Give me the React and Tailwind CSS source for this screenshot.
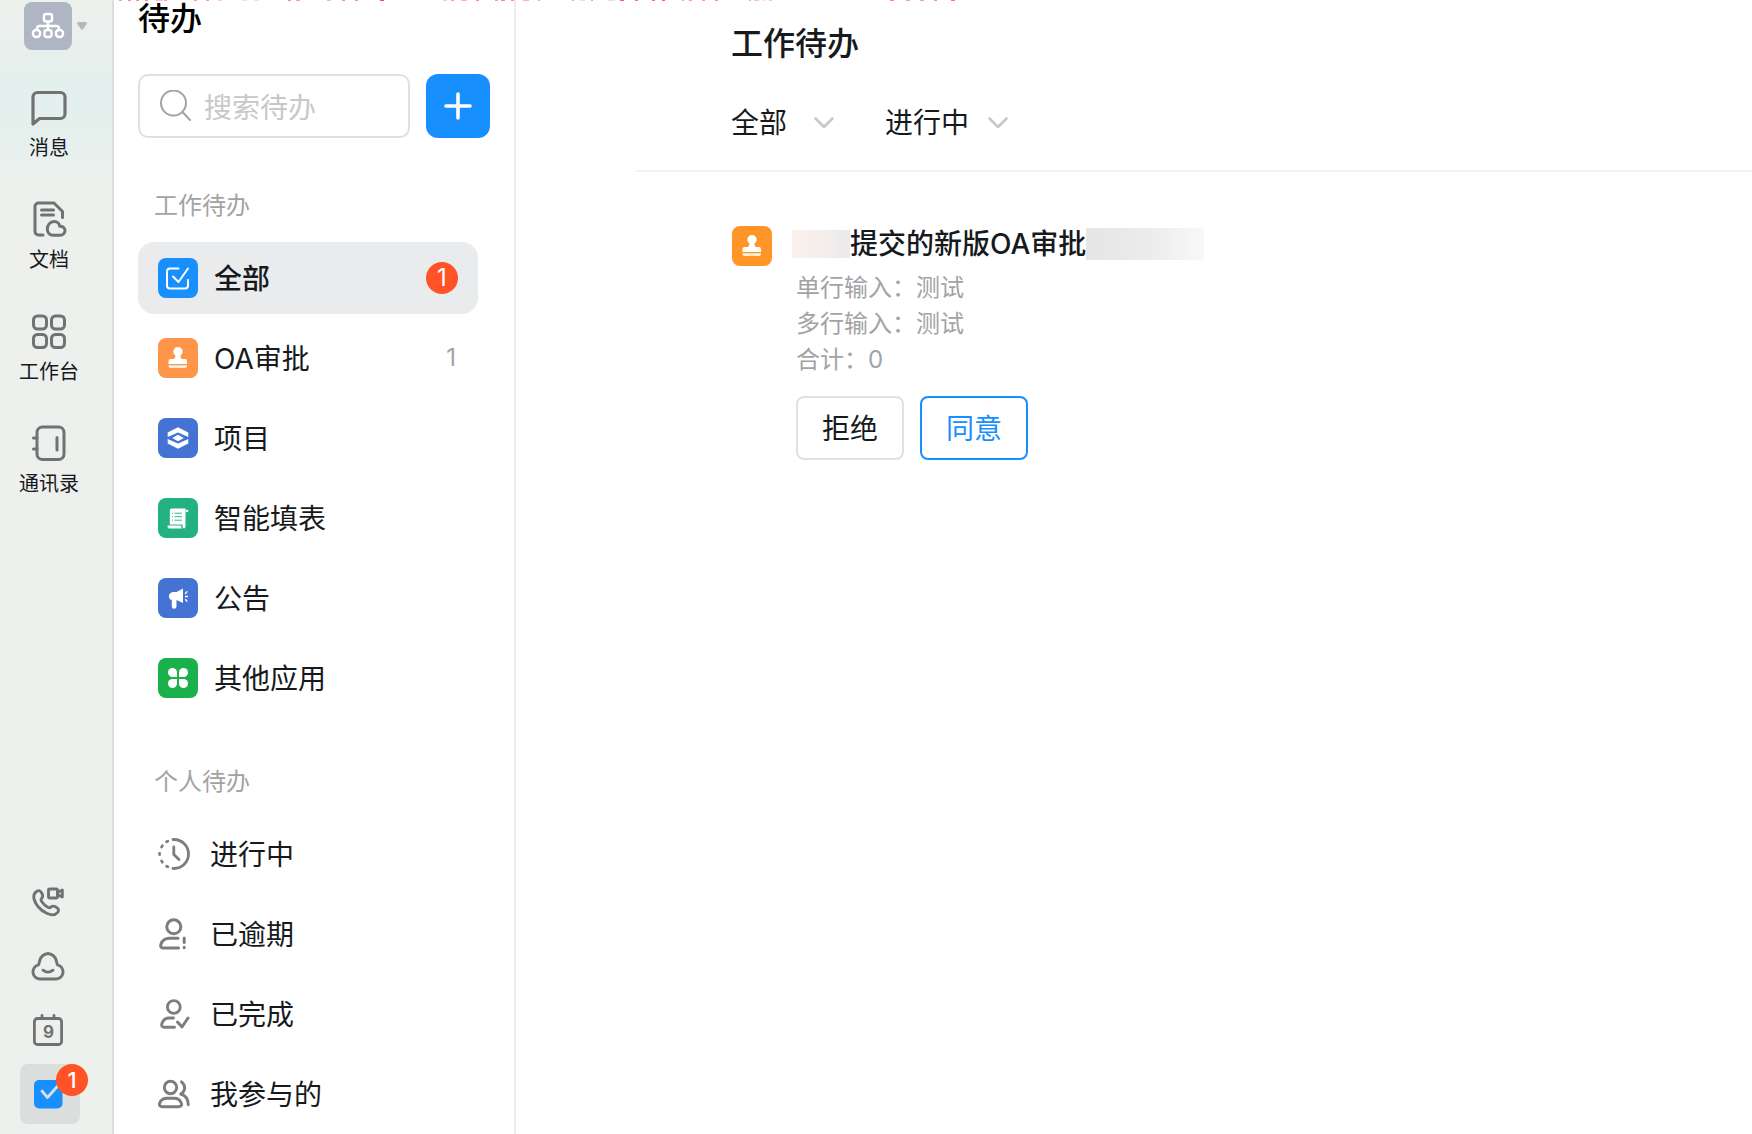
import React, { useState } from "react";
import clsx from "clsx";

const STROKE = {
  fill: "none",
  stroke: "currentColor",
  strokeLinecap: "round",
  strokeLinejoin: "round",
};

const OrgIcon = () => (
  <svg className="size-12" viewBox="0 0 48 48" {...STROKE} strokeWidth="2.4">
    <rect x="20" y="12" width="8" height="7.5" rx="2" />
    <path d="M13 27v-.5a2.500 2.500 0 0 1 2.500-2.500h17a2.500 2.500 0 0 1 2.500 2.500v.5M24 20v7" />
    <rect x="9" y="28" width="7" height="7" rx="3" />
    <rect x="20.500" y="28" width="7" height="7" rx="2.500" />
    <rect x="32" y="28" width="7" height="7" rx="3" />
  </svg>
);

const MessageIcon = () => (
  <svg className="size-10" viewBox="0 0 40 40" {...STROKE} strokeWidth="3.2">
    <path d="M4 36V9a4.500 4.500 0 0 1 4.500-4.500h23A4.500 4.500 0 0 1 36 9v17a4.500 4.500 0 0 1-4.500 4.500H10.500z" />
  </svg>
);

const DocIcon = () => (
  <svg className="size-10" viewBox="0 0 40 40" {...STROKE} strokeWidth="3">
    <path d="M14 35H9.500a3.500 3.500 0 0 1-3.500-3.500v-25A3.500 3.500 0 0 1 9.500 3H25l8.500 8.500V17.500" />
    <path d="M12.500 10h12M12.500 15h12" />
    <path d="M24.500 35.200c-4 0-6.200-2.700-6.200-6.300s2.700-7.400 6.700-7.400c3.200 0 5.500 2 5.700 4.800 3-.3 5.300 1.600 5.300 4.300 0 2.900-2.200 4.600-4.800 4.600z" />
  </svg>
);

const GridIcon = () => (
  <svg className="size-10" viewBox="0 0 40 40" {...STROKE} strokeWidth="3">
    <rect x="4.500" y="4" width="13" height="13" rx="4" />
    <rect x="22.500" y="4" width="13" height="13" rx="4" />
    <rect x="4.500" y="22.500" width="13" height="13" rx="4" />
    <rect x="22.500" y="22.500" width="13" height="13" rx="4" />
  </svg>
);

const ContactsIcon = () => (
  <svg className="size-10" viewBox="0 0 40 40" {...STROKE} strokeWidth="3">
    <rect x="8" y="3" width="27" height="32.500" rx="5.500" />
    <path d="M4.500 14H8M4.500 25H8M28 13.500v12.500" />
  </svg>
);

const CallIcon = () => (
  <svg className="size-9" viewBox="0 0 36 36" {...STROKE} strokeWidth="2.900">
    <path d="M6.500 7.500c2.500-1.800 4-.8 5.500 2 1.300 2.500 1 3.500-.3 4.800-1.200 1.200-.8 2.200.3 3.700 1.500 2 3 3.500 5 4.800 1.500 1 2.700 1.300 3.800.3 1.500-1.300 2.600-1.500 4.700-.3 3.200 1.900 3.900 3.600 2.200 5.600-2.500 3-6.500 3.100-11 .9C10.500 26.200 5.800 21 4.200 15.500c-1-3.500-.2-6.300 2.300-8z" />
    <rect x="18.500" y="5" width="9" height="9" rx="1" />
    <path d="M27.500 8.500l4.800-2.500v7L27.500 10.500z" />
  </svg>
);

const CloudIcon = () => (
  <svg className="size-9" viewBox="0 0 36 36" {...STROKE} strokeWidth="2.900">
    <path d="M10.500 31h15a7.200 7.200 0 0 0 2-14.200c-.5-1-.6-1.400-.9-3A9.300 9.300 0 0 0 18 5.500a9.300 9.300 0 0 0-8.600 8.300c-.3 1.600-.4 2-.9 3A7.200 7.200 0 0 0 10.500 31z" />
    <path d="M13 22.200c3 2.300 7 2.300 10 0" />
  </svg>
);

const CalendarIcon = () => (
  <svg className="size-9" viewBox="0 0 36 36" {...STROKE} strokeWidth="2.800">
    <rect x="4.400" y="6.500" width="27.200" height="26" rx="3" />
    <path d="M12 3.500v2M24 3.500v2" />
    <text
      x="18.500"
      y="25.500"
      textAnchor="middle"
      fontSize="17"
      fontWeight="700"
      fill="currentColor"
      stroke="none"
    >
      9
    </text>
  </svg>
);

const TodoIcon = () => (
  <svg className="size-9" viewBox="0 0 36 36" {...STROKE}>
    <rect x="4" y="4" width="28.500" height="28.500" rx="5" fill="#188fff" stroke="none" />
    <path d="M12 15l5.500 6.500L29 8.500" stroke="#dcdedd" strokeWidth="2.800" />
  </svg>
);

const AllIcon = () => (
  <svg className="size-10" viewBox="0 0 40 40" {...STROKE} strokeWidth="2">
    <path d="M20.500 10.500H12A3 3 0 0 0 9 13.500v14a3 3 0 0 0 3 3h15a3 3 0 0 0 3-3V22M15 18.500l5.500 5.500 9.500-13.500" />
  </svg>
);

const StampIcon = () => (
  <svg className="size-10" viewBox="0 0 40 40" fill="currentColor">
    <path d="M20 9a4.600 4.600 0 0 1 3 8.100c-.7.700-.8 2.400.3 3.400.5.500 1 .5 2 .5H27a2 2 0 0 1 2 2v3H10.500v-3a2 2 0 0 1 2-2h2c1 0 1.500 0 2-.5 1.100-1 1.200-2.700.5-3.400A4.600 4.600 0 0 1 20 9z" />
    <path d="M10.500 27.300H29V28a2 2 0 0 1-2 2H12.500a2 2 0 0 1-2-2z" opacity=".85" />
  </svg>
);

const ProjectIcon = () => (
  <svg className="size-10" viewBox="0 0 40 40" fill="currentColor">
    <path d="M20 9.300L30.300 14.600V19L20 14.600 9.700 19v-4.400z" />
    <path d="M20 16.800l5.800 3.200-5.800 3.200-5.800-3.200z" />
    <path d="M20 30.700L9.700 25.400V21L20 25.400 30.300 21v4.400z" />
  </svg>
);

const FormIcon = () => (
  <svg className="size-10" viewBox="0 0 40 40" fill="currentColor">
    <path d="M13 10.500h14.500V28c0 1.500-.6 2.500-1.500 2.500S24.500 29.500 24.500 28v-1.500H11.800V12z" />
    <path d="M9.500 27.500h13.500c0 1.200.3 2 .8 3H11c-1 0-1.500-1-1.500-3z" />
    <circle cx="29" cy="13" r="1.300" />
    <path d="M14 15.200h1M16.500 15.200h7.500M14 18.700h1M16.500 18.700h7.500M14 22.200h1M16.500 22.200h7.500" stroke="#23b27f" strokeWidth=".9" />
  </svg>
);

const NoticeIcon = () => (
  <svg className="size-10" viewBox="0 0 40 40" fill="currentColor">
    <path d="M15 14h3.500l6.500-3.500v14.500l-6.500-3V28.500a2.300 2.300 0 0 1-4.700 0V22c-4-.5-4-7.500 1.200-8z" />
    <path d="M27.500 15.500l1.500-1.800M27.500 18.500H29.500M27.500 21.500l1.500 1.800" stroke="currentColor" strokeWidth="1.300" strokeLinecap="round" />
  </svg>
);

const AppsIcon = () => (
  <svg className="size-10" viewBox="0 0 40 40" fill="currentColor">
    <path d="M14.500 10a4.500 4.500 0 0 1 4.500 4.500V19h-4.500a4.500 4.500 0 0 1 0-9z" />
    <path d="M25.500 10a4.500 4.500 0 0 1 0 9H21v-4.500a4.500 4.500 0 0 1 4.500-4.500z" />
    <path d="M14.500 21H19v4.500a4.500 4.500 0 1 1-4.500-4.500z" />
    <path d="M21 21h4.500a4.500 4.500 0 1 1-4.500 4.500z" />
  </svg>
);

const DoingIcon = () => (
  <svg className="size-8" viewBox="0 0 32 32" {...STROKE} strokeWidth="2.800">
    <path d="M15 1.500h1a14.500 14.500 0 0 1 0 29h-1M15.800 9v7.500l5.200 5" />
    <path d="M8.600 3.800l1.200-.6M3.600 9l.8-1.200M1.600 15.400v1.200M3.600 23l.8 1.200M8.600 28.200l1.200.6" />
  </svg>
);

const OverdueIcon = () => (
  <svg className="size-8" viewBox="0 0 32 32" {...STROKE} strokeWidth="3">
    <circle cx="15.800" cy="8.800" r="7" />
    <path d="M20.500 30H5c-2.300 0-2.700-2-2-4 1.300-3.700 4.500-5.800 8.500-5.800h8.500M26.200 20v4.500M26.200 29.300v.5" />
  </svg>
);

const DoneIcon = () => (
  <svg className="size-8" viewBox="0 0 32 32" {...STROKE} strokeWidth="2.900">
    <circle cx="15.800" cy="9" r="6.400" />
    <path d="M16.500 29.200H6c-2.300 0-2.700-2-2-3.800C5.200 22 7.700 20 11 20h4.500M19.500 24l4.500 5 6-9" />
  </svg>
);

const JoinedIcon = () => (
  <svg className="size-8" viewBox="0 0 32 32" {...STROKE} strokeWidth="2.900">
    <circle cx="12.500" cy="9.500" r="6.200" />
    <path d="M4.500 28.700c-2.600 0-3.600-1.500-2.800-3.700 1.200-3.400 3.800-4.800 7.300-4.800h7c3.500 0 6.100 1.400 7.300 4.800.8 2.200-.2 3.700-2.800 3.700z" />
    <path d="M23.500 3.800c4.500 3.500 4.300 9.500-.8 12.200 5 1.500 7.500 5.500 7.600 10.700" />
  </svg>
);

const ChevronIcon = ({ className }) => (
  <svg className={className} viewBox="0 0 20 12" {...STROKE} strokeWidth="2.600">
    <path d="M1.500 1.500L10 10l8.500-8.500" />
  </svg>
);

const NAV_ITEMS = [
  { label: "消息", Icon: MessageIcon },
  { label: "文档", Icon: DocIcon },
  { label: "工作台", Icon: GridIcon },
  { label: "通讯录", Icon: ContactsIcon },
];

const TOOLS = [
  { label: "电话会议", Icon: CallIcon },
  { label: "云盘", Icon: CloudIcon },
  { label: "日历", Icon: CalendarIcon },
];

const WORK_ITEMS = [
  { label: "全部", Icon: AllIcon, color: "bg-[#188fff]", count: 1 },
  { label: "OA审批", Icon: StampIcon, color: "bg-[#ff9548]", count: 1 },
  { label: "项目", Icon: ProjectIcon, color: "bg-[#4473d4]" },
  { label: "智能填表", Icon: FormIcon, color: "bg-[#23b27f]" },
  { label: "公告", Icon: NoticeIcon, color: "bg-[#4473d4]" },
  { label: "其他应用", Icon: AppsIcon, color: "bg-[#1ab04c]" },
];

const PERSONAL_ITEMS = [
  { label: "进行中", Icon: DoingIcon },
  { label: "已逾期", Icon: OverdueIcon },
  { label: "已完成", Icon: DoneIcon },
  { label: "我参与的", Icon: JoinedIcon },
];

const DETAILS = [
  { name: "单行输入", value: "测试" },
  { name: "多行输入", value: "测试" },
  { name: "合计", value: "0" },
];

// lower edge of the red notice that has scrolled out of view: [x, width, opacity]
const NOTICE_MARKS = [
  [5, 3, 0.5], [14, 3, 0.6], [22, 3, 0.6], [31, 3, 0.6], [42, 7, 0.3], [50, 3, 0.5],
  [80, 3, 0.5], [92, 3, 0.5], [104, 4, 0.3], [128, 5, 0.2], [140, 5, 0.2], [174, 3, 0.6],
  [182, 4, 0.5], [213, 4, 0.4], [228, 3, 0.6], [241, 3, 0.6], [266, 4, 0.9], [329, 4, 0.3],
  [337, 3, 0.5], [347, 6, 0.4], [362, 3, 0.6], [381, 3, 0.5], [387, 4, 0.6], [397, 3, 0.6],
  [409, 6, 0.4], [424, 2, 0.5], [458, 2, 0.5], [466, 5, 0.2], [477, 2, 0.5], [494, 7, 0.2],
  [506, 4, 0.8], [521, 3, 0.7], [538, 3, 0.7], [548, 3, 0.8], [568, 2, 0.5], [575, 3, 0.5],
  [588, 3, 0.5], [601, 3, 0.6], [635, 2, 0.5], [640, 5, 0.3], [649, 3, 0.2], [655, 3, 0.3],
  [776, 4, 0.6], [792, 4, 0.5], [806, 4, 0.5], [820, 3, 0.6], [837, 4, 0.7],
];

const Rail = () => (
  <nav className="flex w-[114px] shrink-0 flex-col border-r-2 border-[#dcdedd] bg-[#eef0ed] bg-[linear-gradient(#eef0ed_0px,#e4f0ed_80px,#e4f0ed_120px,#eef0ed_200px)] pt-0.5 pb-2.5">
    <button className="flex items-center gap-1 pl-6" aria-label="切换组织">
      <span className="rounded-lg bg-[#aeb6c4] text-white">
        <OrgIcon />
      </span>
      <svg className="size-3 text-[#b5b8b6]" viewBox="0 0 12 12" fill="currentColor">
        <path d="M2.500 2h7c1.200 0 1.700 1.300 1 2.200L7 9.300c-.5.700-1.500.7-2 0L1.500 4.200C.8 3.300 1.300 2 2.500 2z" />
      </svg>
    </button>
    <ul className="mt-[38px] flex flex-col gap-[38px] pr-3.5">
      {NAV_ITEMS.map(({ label, Icon }) => (
        <li key={label}>
          <a href="#" className="flex flex-col items-center gap-1.5 text-[#717373]">
            <Icon />
            <span className="text-[20px] leading-7 text-[#171a1d]">{label}</span>
          </a>
        </li>
      ))}
    </ul>
    <div className="mt-auto flex flex-col items-start pl-5">
      <div className="mb-4 flex flex-col gap-7 pl-2.5 text-[#717373]">
        {TOOLS.map(({ label, Icon }) => (
          <button key={label} aria-label={label}>
            <Icon />
          </button>
        ))}
      </div>
      <button
        className="relative flex size-15 items-center justify-center rounded-lg bg-[#dcdedd] pr-1"
        aria-label="待办"
      >
        <TodoIcon />
        <span className="absolute top-0 -right-2 flex size-8 items-center justify-center rounded-full bg-[#ff5226] text-[22px] leading-8 font-medium text-white">
          1
        </span>
      </button>
    </div>
  </nav>
);

const GroupTitle = ({ children }) => (
  <h2 className="pl-4 text-[24px] leading-9 text-[#a2a3a5]">{children}</h2>
);

const Sidebar = ({ active, onSelect }) => (
  <aside className="flex w-[402px] shrink-0 flex-col border-r-2 border-[#ededed] bg-white px-6">
    <h1 className="text-[32px] leading-[38px] font-medium text-black">待办</h1>
    <div className="mt-9 flex gap-4">
      <label className="flex h-16 min-w-0 flex-1 items-center gap-3 rounded-[10px] border-2 border-[#e0e0e0] pl-5">
        <svg className="size-8 shrink-0 text-[#a2a3a5]" viewBox="0 0 32 32" {...STROKE} strokeWidth="2">
          <circle cx="13.500" cy="13" r="12.500" />
          <path d="M22.500 22L30 30" />
        </svg>
        <input
          type="search"
          aria-label="搜索待办"
          placeholder="搜索待办"
          className="w-full min-w-0 bg-transparent pt-1 text-[28px] leading-10 outline-none placeholder:text-[#c8c8c9]"
        />
      </label>
      <button
        className="flex size-16 items-center justify-center rounded-xl bg-[#188fff] text-white"
        aria-label="新建待办"
      >
        <svg className="size-7" viewBox="0 0 28 28" {...STROKE} strokeWidth="3.600">
          <path d="M14 2v24M2 14h24" />
        </svg>
      </button>
    </div>

    <div className="mt-[50px] pr-3">
      <GroupTitle>工作待办</GroupTitle>
      <ul className="mt-[18px] flex flex-col gap-2">
        {WORK_ITEMS.map(({ label, Icon, color, count }) => {
          const selected = label === active;
          return (
            <li key={label}>
              <button
                onClick={() => onSelect(label)}
                className={clsx(
                  "flex h-18 w-full items-center gap-4 rounded-2xl px-5 text-left text-[28px] leading-10 text-[#171a1d]",
                  selected && "bg-[#eaebed] font-medium"
                )}
              >
                <span className={clsx("rounded-lg text-white", color)}>
                  <Icon />
                </span>
                <span className="flex-1 pt-0.5">{label}</span>
                {count && (
                  <span
                    className={clsx(
                      "text-[24px] leading-8 font-normal",
                      selected
                        ? "size-8 rounded-full bg-[#ff5226] text-center text-white"
                        : "pr-0.5 text-[#a2a3a5]"
                    )}
                  >
                    {count}
                  </span>
                )}
              </button>
            </li>
          );
        })}
      </ul>
    </div>

    <div className="mt-[50px] pr-3">
      <GroupTitle>个人待办</GroupTitle>
      <ul className="mt-[18px] flex flex-col gap-2">
        {PERSONAL_ITEMS.map(({ label, Icon }) => (
          <li key={label}>
            <button
              onClick={() => onSelect(label)}
              className="flex h-18 w-full items-center gap-5 rounded-2xl px-5 text-left text-[28px] leading-10 text-[#171a1d]"
            >
              <span className="text-[#7b7d7e]">
                <Icon />
              </span>
              <span className="pt-0.5">{label}</span>
            </button>
          </li>
        ))}
      </ul>
    </div>
  </aside>
);

const Filter = ({ label, options, className }) => (
  <label className={clsx("relative block", className)}>
    <select
      aria-label={label}
      className="w-full appearance-none bg-transparent text-[28px] leading-10 text-[#171a1d] outline-none"
    >
      {options.map((option) => (
        <option key={option}>{option}</option>
      ))}
    </select>
    <ChevronIcon className="pointer-events-none absolute top-1/2 right-0 h-3 w-5 -translate-y-1/2 text-[#c8c8c9]" />
  </label>
);

const TaskCard = () => (
  <article className="flex gap-6">
    <span className="size-10 shrink-0 rounded-lg bg-[#ff9427] text-white">
      <StampIcon />
    </span>
    <div>
      <h3 className="flex items-center text-[28px] leading-9 font-medium text-[#171a1d]">
        <span className="-ml-1 h-7 w-[58px] bg-linear-to-r from-[#fcf1ec] to-[#ebebeb]" />
        提交的新版OA审批
        <span className="h-8 w-[118px] bg-linear-to-r from-[#e6e6e6] via-[#ebebeb] to-[#f8f8f8]" />
      </h3>
      <div className="mt-2 text-[24px] leading-9 text-[#a2a3a5]">
        {DETAILS.map(({ name, value }) => (
          <p key={name}>
            {name}：{value}
          </p>
        ))}
      </div>
      <div className="mt-4.5 flex gap-4 text-[28px]">
        <button className="h-16 w-27 rounded-lg border-2 border-[#e0e2e2] pt-0.5 text-[#171a1d]">
          拒绝
        </button>
        <button className="h-16 w-27 rounded-lg border-2 border-[#188fff] pt-0.5 text-[#188fff]">
          同意
        </button>
      </div>
    </div>
  </article>
);

const App = () => {
  const [active, setActive] = useState("全部");

  return (
    <div className="relative flex min-h-screen bg-white font-['Inter','Noto_Sans_CJK_SC',sans-serif]">
      <Rail />
      <Sidebar active={active} onSelect={setActive} />
      <main className="min-w-0 flex-1 pl-[120px]">
        <header className="border-b-2 border-[#f0f1f5] pt-6 pb-[27px] pl-[95px]">
          <h2 className="text-[32px] leading-10 font-medium text-[#171a1d]">工作待办</h2>
          <div className="mt-[39px] flex gap-[51px]">
            <Filter label="类型" options={["全部", "OA审批", "项目"]} className="w-[103px]" />
            <Filter label="状态" options={["进行中", "已完成"]} className="w-[123px]" />
          </div>
        </header>
        <div className="pt-[54px] pl-24">
          <TaskCard />
        </div>
      </main>
      <svg className="pointer-events-none absolute top-0 left-[114px] h-px w-[850px]" fill="#ff3b3b">
        {NOTICE_MARKS.map(([x, width, opacity]) => (
          <rect key={x} x={x} y="0" width={width} height="1" opacity={opacity} />
        ))}
      </svg>
    </div>
  );
};

export default App;
